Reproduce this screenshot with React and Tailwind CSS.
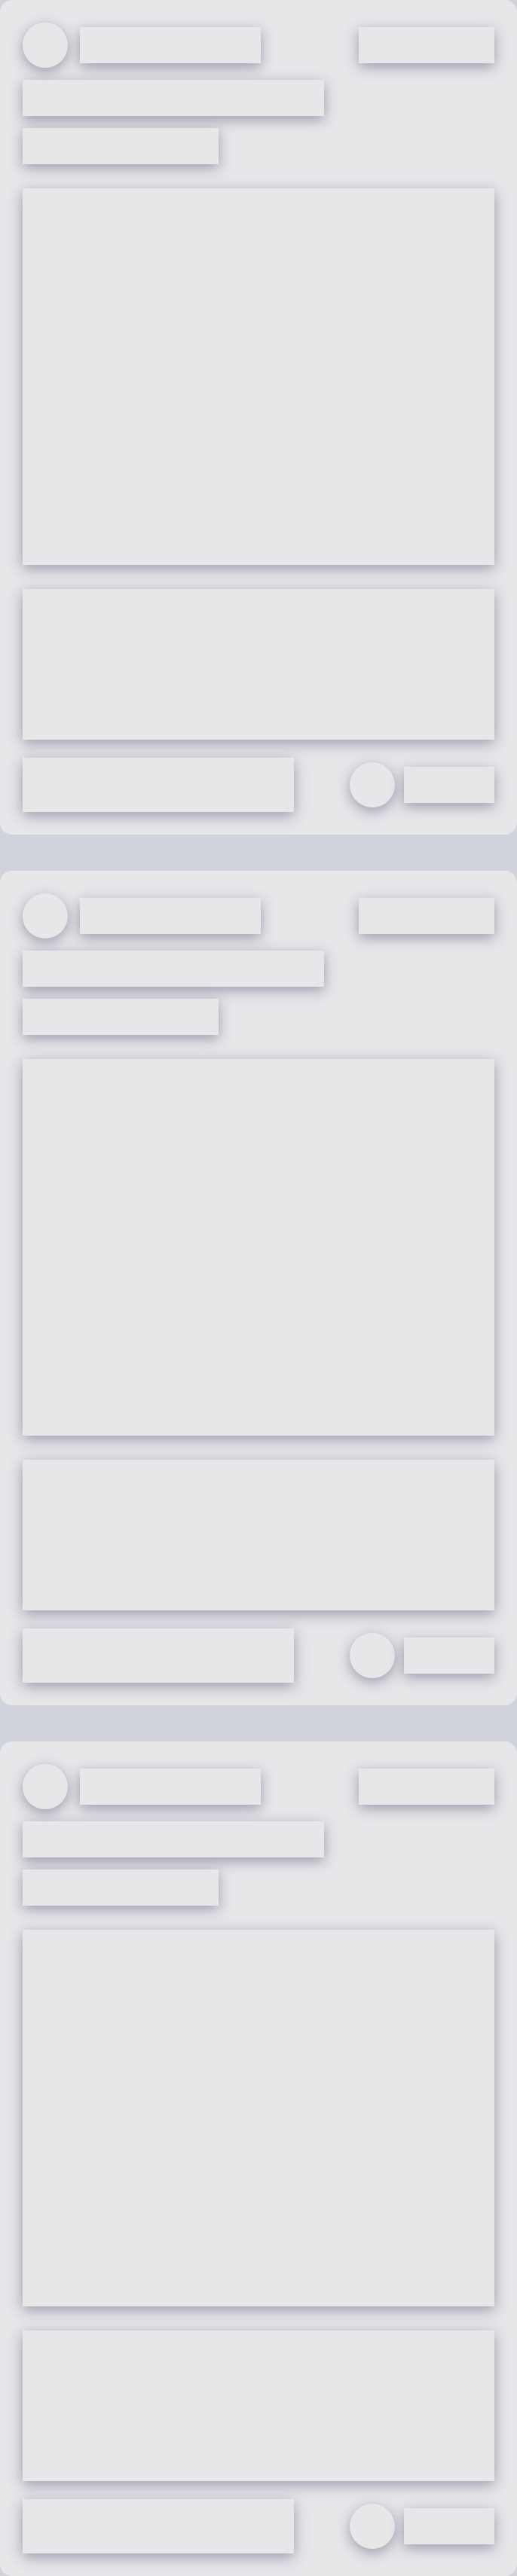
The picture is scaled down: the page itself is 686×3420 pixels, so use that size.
const block = "bg-[#e7e7ea] shadow-[0_5px_18px_rgba(62,60,96,0.45)]";

const SkeletonCard = () => (
  <div className="flex flex-col rounded-2xl bg-[#e7e7ea] p-[30px]">
    {/* header: avatar, name, date */}
    <div className="flex items-center justify-between">
      <div className="flex items-center gap-4">
        <div className={`h-[60px] w-[60px] rounded-full ${block}`} />
        <div className={`h-12 w-[240px] ${block}`} />
      </div>
      <div className={`h-12 w-[180px] ${block}`} />
    </div>

    {/* title lines */}
    <div className={`mt-4 h-12 w-[400px] ${block}`} />
    <div className={`mt-4 h-12 w-[260px] ${block}`} />

    {/* media */}
    <div className={`mt-8 h-[500px] w-full ${block}`} />
    <div className={`mt-8 h-[200px] w-full ${block}`} />

    {/* footer */}
    <div className="mt-6 flex items-center justify-between">
      <div className={`h-[72px] w-[360px] ${block}`} />
      <div className="flex items-center gap-3">
        <div className={`h-[60px] w-[60px] rounded-full ${block}`} />
        <div className={`h-12 w-[120px] ${block}`} />
      </div>
    </div>
  </div>
);

export default function App() {
  return (
    <div className="flex min-h-screen w-[686px] flex-col gap-12 bg-[#d0d2dc]">
      <SkeletonCard />
      <SkeletonCard />
      <SkeletonCard />
    </div>
  );
}
